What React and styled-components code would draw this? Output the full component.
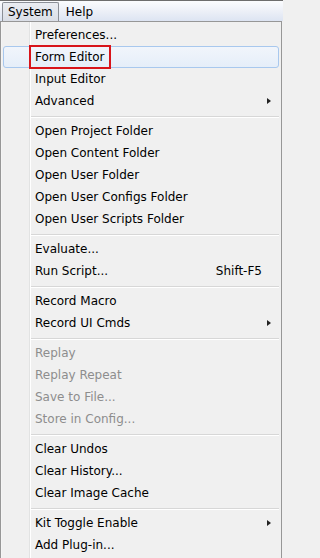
import React from "react";
import styled, { createGlobalStyle } from "styled-components";

const Global = createGlobalStyle`
  html, body { margin: 0; padding: 0; background: #f0f0f0; }
  body { font-family: "DejaVu Sans", sans-serif; }
`;

const Page = styled.div`
  width: 283px;
  height: 558px;
  overflow: hidden;
  display: flex;
  flex-direction: column;
  background: #f0f0f0;
  font-family: "DejaVu Sans", "Liberation Sans", sans-serif;
  font-size: 12px;
  color: #000;
`;

const MenuBar = styled.div`
  height: 21px;
  flex: none;
  box-sizing: border-box;
  border-top: 1px solid #6d6d6d;
  background: linear-gradient(#fbfcfe 0%, #eef1f8 45%, #dde4f2 100%);
  display: flex;
  align-items: flex-end;
  padding: 0 0 0 2px;
  gap: 1px;
`;

const BarItem = styled.div`
  height: 19px;
  box-sizing: border-box;
  padding: 0 5px 1px 5px;
  display: flex;
  align-items: center;
  font-size: 12px;
  border: 1px solid ${(p) => (p.$open ? "#8b8f96" : "transparent")};
  border-bottom: none;
  border-radius: 2px 2px 0 0;
  background: ${(p) =>
    p.$open ? "linear-gradient(#eaedf2, #dadee6)" : "transparent"};
`;

const Menu = styled.div`
  flex: 1;
  position: relative;
  box-sizing: border-box;
  border-left: 1px solid #979797;
  border-right: 1px solid #979797;
  border-top: 1px solid #979797;
  margin-right: 1px;
  background: #f0f0f0;
  padding: 2px 2px 1px;
  box-shadow: inset 1px 0 0 #f5f5f5;
`;

const Gutter = styled.div`
  position: absolute;
  top: 0;
  bottom: 0;
  left: 28px;
  border-left: 1px solid #e2e3e3;
  background: #fff;
  width: 1px;
`;

const Row = styled.div`
  position: relative;
  height: 22px;
  box-sizing: border-box;
  display: flex;
  align-items: center;
  padding: 0 7px 0 31px;
  font-size: 12px;
  color: ${(p) => (p.$disabled ? "#8d8d8d" : "#000")};
  border: 1px solid ${(p) => (p.$hover ? "#a8c8ee" : "transparent")};
  border-radius: 3px;
  background: ${(p) =>
    p.$hover ? "linear-gradient(#f1f5fb, #e5eef9)" : "transparent"};
`;

const Label = styled.span`
  flex: 1;
  white-space: nowrap;
`;

const Shortcut = styled.span`
  margin-right: 9px;
  white-space: nowrap;
`;

const Arrow = styled.span`
  width: 0;
  height: 0;
  border-top: 3.5px solid transparent;
  border-bottom: 3.5px solid transparent;
  border-left: 4px solid #222;
`;

const Sep = styled.div`
  height: 8px;
  display: flex;
  align-items: center;
  padding-left: 28px;
  &::after {
    content: "";
    flex: 1;
    height: 1px;
    background: #d7d7d7;
    box-shadow: 0 1px 0 #fff;
  }
`;

const Annotation = styled.div`
  position: absolute;
  left: 25px;
  top: -2px;
  width: 82px;
  height: 24px;
  border: 2px solid #d8141a;
  box-sizing: border-box;
  pointer-events: none;
`;

const items = [
  { label: "Preferences..." },
  { label: "Form Editor", hover: true },
  { label: "Input Editor" },
  { label: "Advanced", sub: true },
  "sep",
  { label: "Open Project Folder" },
  { label: "Open Content Folder" },
  { label: "Open User Folder" },
  { label: "Open User Configs Folder" },
  { label: "Open User Scripts Folder" },
  "sep",
  { label: "Evaluate..." },
  { label: "Run Script...", shortcut: "Shift-F5" },
  "sep",
  { label: "Record Macro" },
  { label: "Record UI Cmds", sub: true },
  "sep",
  { label: "Replay", disabled: true },
  { label: "Replay Repeat", disabled: true },
  { label: "Save to File...", disabled: true },
  { label: "Store in Config...", disabled: true },
  "sep",
  { label: "Clear Undos" },
  { label: "Clear History..." },
  { label: "Clear Image Cache" },
  "sep",
  { label: "Kit Toggle Enable", sub: true },
  { label: "Add Plug-in..." },
];

export default function App() {
  return (
    <>
      <Global />
      <Page>
        <MenuBar>
          <BarItem $open>System</BarItem>
          <BarItem>Help</BarItem>
        </MenuBar>
        <Menu>
          <Gutter />
          {items.map((it, i) =>
            it === "sep" ? (
              <Sep key={i} />
            ) : (
              <Row key={i} $hover={it.hover} $disabled={it.disabled}>
                {it.hover && <Annotation />}
                <Label>{it.label}</Label>
                {it.shortcut && <Shortcut>{it.shortcut}</Shortcut>}
                {it.sub && <Arrow />}
              </Row>
            )
          )}
        </Menu>
      </Page>
    </>
  );
}
